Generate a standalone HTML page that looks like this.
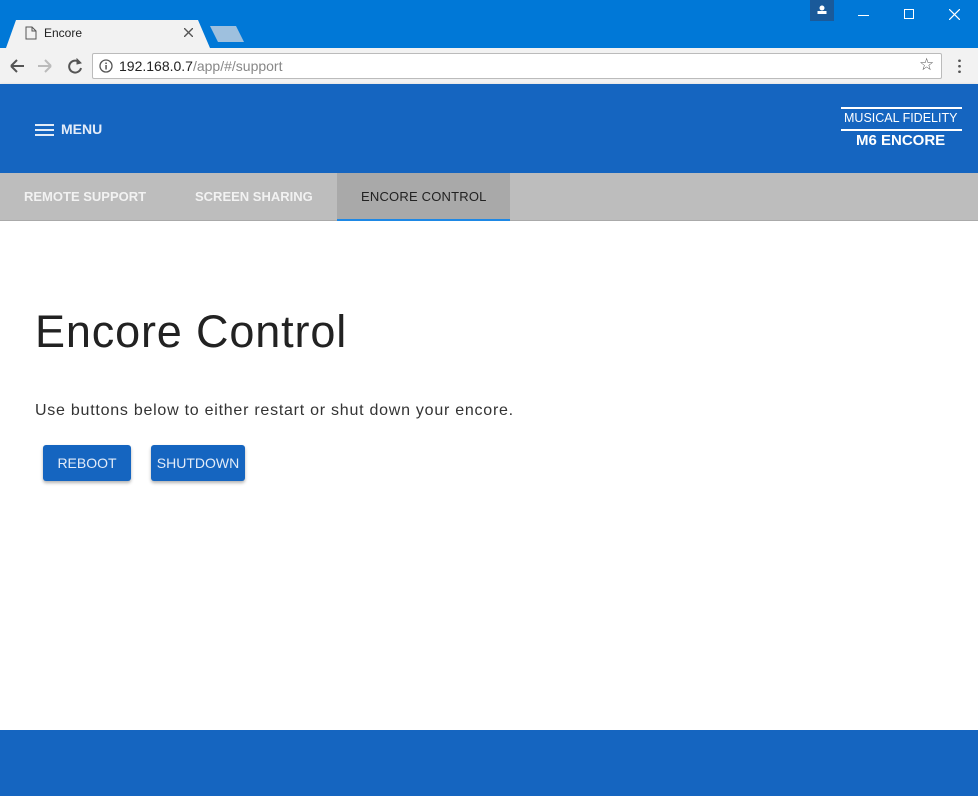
<!DOCTYPE html>
<html><head><meta charset="utf-8"><style>
*{margin:0;padding:0;box-sizing:border-box}
body{width:978px;height:796px;overflow:hidden;background:#fff;font-family:"Liberation Sans",sans-serif;position:relative}
.abs{position:absolute}
</style></head><body>
<div class="abs" style="left:0;top:0;width:978px;height:48px;background:#0078d7"></div>
<div class="abs" style="left:810px;top:0;width:24px;height:21px;background:#1a5a9a"></div>
<svg class="abs" style="left:816px;top:4px" width="12" height="12"><circle cx="6" cy="4" r="2.5" fill="#fff"/><rect x="1.5" y="7" width="9" height="3" fill="#fff"/></svg>
<div class="abs" style="left:858px;top:15px;width:11px;height:1px;background:#fff"></div>
<div class="abs" style="left:904px;top:9px;width:10px;height:10px;border:1px solid #fff"></div>
<svg class="abs" style="left:949px;top:9px" width="11" height="11"><path d="M0 0L11 11M11 0L0 11" stroke="#fff" stroke-width="1.2"/></svg>
<svg class="abs" style="left:0;top:18px" width="260" height="30"><path d="M6 30L16 2H198L210 30Z" fill="#f2f2f2"/><path d="M210 8H236L244 24H218Z" fill="#9ec0de"/></svg>
<svg class="abs" style="left:25px;top:26px" width="12" height="14"><path d="M1 1H7L11 5V13H1Z M7 1V5H11" fill="none" stroke="#555"/></svg>
<div class="abs" style="left:44px;top:26px;font-size:12px;color:#222">Encore</div>
<svg class="abs" style="left:184px;top:28px" width="9" height="9"><path d="M0 0L9 9M9 0L0 9" stroke="#555" stroke-width="1.4"/></svg>
<div class="abs" style="left:0;top:48px;width:978px;height:36px;background:#f2f2f2"></div>
<svg class="abs" style="left:9px;top:58px" width="80" height="16"><path d="M2 8H15M2 8L8 2M2 8L8 14" stroke="#555" stroke-width="2" fill="none"/><path d="M29 8H42M42 8L36 2M42 8L36 14" stroke="#bbb" stroke-width="2" fill="none"/><path d="M71 5A6 6 0 1 0 72 10" stroke="#555" stroke-width="2" fill="none"/><path d="M68 1L72 5L68 6Z" fill="#555" stroke="#555"/></svg>
<div class="abs" style="left:92px;top:53px;width:850px;height:26px;background:#fff;border:1px solid #bbb;border-radius:2px"></div>
<svg class="abs" style="left:99px;top:59px" width="14" height="14"><circle cx="7" cy="7" r="6" fill="none" stroke="#555" stroke-width="1.3"/><rect x="6.3" y="6" width="1.5" height="4.5" fill="#555"/><rect x="6.3" y="3.5" width="1.5" height="1.5" fill="#555"/></svg>
<div class="abs" style="left:119px;top:58px;font-size:14px;color:#222">192.168.0.7<span style="color:#888">/app/#/support</span></div>
<div class="abs" style="left:919px;top:55px;font-size:17px;color:#555">☆</div>
<div class="abs" style="left:958px;top:58px;width:3px;height:16px;background:radial-gradient(circle,#555 1.2px,transparent 1.5px) 0 0/3px 5.5px"></div>
<div class="abs" style="left:0;top:84px;width:978px;height:89px;background:#1565c0;box-shadow:0 2px 4px rgba(0,0,0,.3)"></div>
<div class="abs" style="left:35px;top:124px;width:19px;height:2px;background:#e3ecf8;box-shadow:0 5px 0 #e3ecf8,0 10px 0 #e3ecf8"></div>
<div class="abs" style="left:61px;top:121px;font-size:14px;font-weight:bold;color:#e3ecf8">MENU</div>
<div class="abs" style="left:841px;top:107px;width:121px;height:1.5px;background:#fff"></div>
<div class="abs" style="left:844px;top:111px;font-size:12.5px;color:#fff;letter-spacing:0">MUSICAL FIDELITY</div>
<div class="abs" style="left:841px;top:129px;width:121px;height:1.5px;background:#fff"></div>
<div class="abs" style="left:856px;top:132px;font-size:15px;font-weight:bold;color:#fff">M6 ENCORE</div>
<div class="abs" style="left:0;top:173px;width:978px;height:48px;background:#bdbdbd;border-bottom:1px solid #aaa"></div>
<div class="abs" style="left:337px;top:173px;width:173px;height:48px;background:#a9a9a9;border-bottom:2px solid #1e88e5"></div>
<div class="abs" style="left:24px;top:189px;font-size:13px;font-weight:bold;color:#f2f2f2">REMOTE SUPPORT</div>
<div class="abs" style="left:195px;top:189px;font-size:13px;font-weight:bold;color:#f2f2f2">SCREEN SHARING</div>
<div class="abs" style="left:361px;top:189px;font-size:13px;color:#222;letter-spacing:0.2px">ENCORE CONTROL</div>
<div class="abs" style="left:35px;top:306px;font-size:45px;color:#222;letter-spacing:0.85px">Encore Control</div>
<div class="abs" style="left:35px;top:402px;font-size:16px;color:#333;letter-spacing:0.75px">Use buttons below to either restart or shut down your encore.</div>
<div class="abs" style="left:43px;top:445px;width:88px;height:36px;background:#1565c0;border-radius:3px;box-shadow:0 2px 3px rgba(0,0,0,.3);color:#e3ecf8;font-size:14px;text-align:center;line-height:36px">REBOOT</div>
<div class="abs" style="left:151px;top:445px;width:94px;height:36px;background:#1565c0;border-radius:3px;box-shadow:0 2px 3px rgba(0,0,0,.3);color:#e3ecf8;font-size:14px;text-align:center;line-height:36px">SHUTDOWN</div>
<div class="abs" style="left:0;top:730px;width:978px;height:66px;background:#1565c0"></div>
</body></html>
